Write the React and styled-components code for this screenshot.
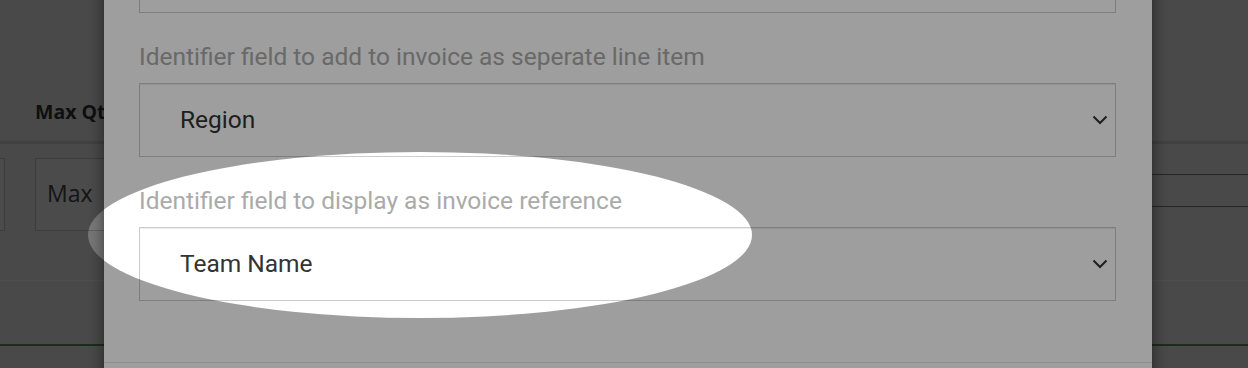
import React from "react";
import styled, { createGlobalStyle } from "styled-components";

const GlobalStyle = createGlobalStyle`
  html, body {
    margin: 0;
    padding: 0;
    height: 368px;
    overflow: hidden;
    background: #efefef;
  }
  * { box-sizing: border-box; }
`;

const Chevron = () => (
  <svg width="16" height="10" viewBox="0 0 16 10" fill="none">
    <path d="M1.5 1.5 L8 8 L14.5 1.5" stroke="#333" strokeWidth="2" />
  </svg>
);

// the first field sits above the visible area, only its select's bottom edge shows
const fields = [
  { label: "Identifier field to add to invoice as seperate line item", value: "Region" },
  { label: "Identifier field to display as invoice reference", value: "Team Name" },
];

const App = () => {
  return (
    <Page>
      <GlobalStyle />
      <HeaderRow>
        <HeaderCell>Max Qty</HeaderCell>
      </HeaderRow>
      <BodyRow>
        <StubBox />
        <QtyBox>Max</QtyBox>
        <RightStrip />
      </BodyRow>
      <LowerBand />

      <Backdrop />
      <Modal>
        <ModalBody>
          <Select />
          {fields.map((f) => (
            <Field key={f.label}>
              <Label>{f.label}</Label>
              <Select>
                <span>{f.value}</span>
                <Chevron />
              </Select>
            </Field>
          ))}
        </ModalBody>
        <ModalFooter />
      </Modal>
      <Spotlight />
    </Page>
  );
};

export default App;

const Page = styled.div`
  position: relative;
  width: 1248px;
  height: 368px;
  overflow: hidden;
  background: #efefef;
  font-family: "Open Sans", "Liberation Sans", sans-serif;
`;

const HeaderRow = styled.div`
  height: 144px;
  display: flex;
  align-items: flex-end;
  padding: 0 0 17px 35px;
  border-bottom: 3px solid #d5d5d5;
`;

const HeaderCell = styled.div`
  font-size: 19.5px;
  font-weight: 700;
  line-height: 24px;
  color: #333;
`;

const BodyRow = styled.div`
  height: 137px;
  display: flex;
  align-items: flex-start;
  padding-top: 14px;
  gap: 30px;
  border-bottom: 1px solid #ffffff;
`;

const StubBox = styled.div`
  width: 40px;
  height: 73px;
  margin-left: -35px;
  border: 1px solid #c4c4c4;
  background: #f4f4f4;
`;

const QtyBox = styled.div`
  width: 220px;
  height: 73px;
  display: flex;
  align-items: center;
  padding: 0 0 3px 11px;
  border: 1px solid #c4c4c4;
  background: #f4f4f4;
  font-size: 23px;
  color: #444;
`;

const RightStrip = styled.div`
  margin-left: auto;
  width: 420px;
  height: 33px;
  margin-top: 16px;
  border-top: 1px solid #7b7b7b;
  border-bottom: 1px solid #7b7b7b;
`;

const LowerBand = styled.div`
  height: 65px;
  border-bottom: 2px solid #5e915e;
`;

const Backdrop = styled.div`
  position: absolute;
  inset: 0;
  background: rgba(0, 0, 0, 0.5);
`;

const Modal = styled.div`
  position: absolute;
  left: 104px;
  top: -80px;
  width: 1048px;
  background: #fff;
  box-shadow: 0 5px 15px rgba(0, 0, 0, 0.5);
  font-family: Roboto, "Liberation Sans", sans-serif;
`;

const ModalBody = styled.div`
  padding: 19px 36px 61px 35px;
  display: flex;
  flex-direction: column;
  gap: 29px;
`;

const Field = styled.div`
  display: flex;
  flex-direction: column;
`;

const Label = styled.label`
  font-size: 24.5px;
  line-height: 29px;
  color: #aaa;
  margin-bottom: 12px;
`;

const Select = styled.div`
  height: 74px;
  display: flex;
  align-items: center;
  justify-content: space-between;
  padding: 0 7px 1px 40px;
  border: 1px solid #ccc;
  box-shadow: inset 0 1px 1px rgba(0, 0, 0, 0.075);
  font-size: 24.5px;
  color: #333;
`;

const ModalFooter = styled.div`
  height: 80px;
  border-top: 1px solid #e5e5e5;
`;

const Spotlight = styled.div`
  position: absolute;
  left: 88px;
  top: 152px;
  width: 664px;
  height: 166px;
  border-radius: 50%;
  box-shadow: 0 0 0 3000px rgba(0, 0, 0, 0.38);
  pointer-events: none;
`;
